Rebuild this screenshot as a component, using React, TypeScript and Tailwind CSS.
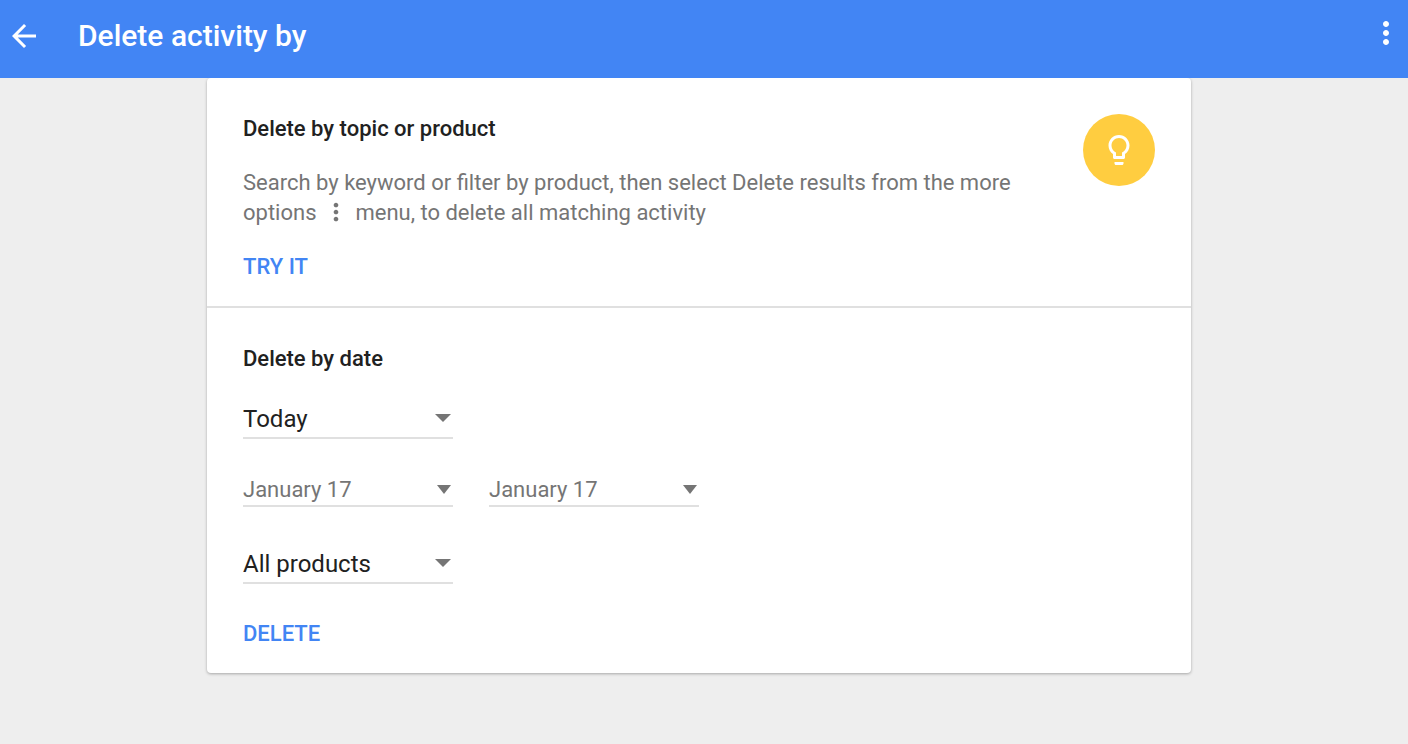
import React from "react";

function MoreIcon({ className }: { className: string }) {
  return (
    <svg viewBox="0 0 24 24" fill="currentColor" className={className} aria-hidden="true">
      <path d="M12 8c1.100 0 2-.900 2-2s-.900-2-2-2-2 .900-2 2 .900 2 2 2zm0 2c-1.100 0-2 .900-2 2s.900 2 2 2 2-.900 2-2-.900-2-2-2zm0 6c-1.100 0-2 .900-2 2s.900 2 2 2 2-.900 2-2-.900-2-2-2z" />
    </svg>
  );
}

function Caret({ className }: { className: string }) {
  return (
    <svg viewBox="0 0 16 8" preserveAspectRatio="none" fill="currentColor" className={className} aria-hidden="true">
      <path d="M0 0h16L8 8z" />
    </svg>
  );
}

function Picker({ label, value }: { label: string; value: string }) {
  return (
    <div className="grid w-[210px] items-center border-b-2 border-[#e0e0e0] text-[#212121]">
      <select aria-label={label} defaultValue={value} className="col-start-1 row-start-1 h-[38px] w-full appearance-none bg-transparent pt-0.5 text-2xl outline-none">
        <option>{value}</option>
      </select>
      <Caret className="pointer-events-none col-start-1 row-start-1 mr-0.5 h-2 w-4 justify-self-end text-[#757575]" />
    </div>
  );
}

function DateButton({ label, value }: { label: string; value: string }) {
  return (
    <button type="button" aria-label={label} className="flex h-[34px] w-[210px] items-end justify-between border-b-2 border-[#e0e0e0] pr-0.5 text-[22px] leading-[30px] text-[#757575]">
      {value}
      <Caret className="h-[9px] w-3.5 self-center" />
    </button>
  );
}

export default function App() {
  return (
    <div className="min-h-screen bg-[#eeeeee] font-['Roboto',sans-serif]">
      <header className="relative z-10 flex h-[78px] items-center bg-[#4285f4] pb-1.5 text-white">
        <button type="button" aria-label="Back" className="ml-1.5">
          <svg viewBox="0 0 24 24" fill="currentColor" className="size-9" aria-hidden="true">
            <path d="M20 11H7.830l5.590-5.590L12 4l-8 8 8 8 1.410-1.410L7.830 13H20v-2z" />
          </svg>
        </button>
        <h1 className="ml-9 text-[30px] leading-9 font-medium">Delete activity by</h1>
        <button type="button" aria-label="More options" className="mr-1 mb-1.5 ml-auto">
          <MoreIcon className="size-9" />
        </button>
      </header>

      <div className="pr-2.5">
        <main className="mx-auto max-w-[984px] rounded-sm bg-white shadow-[0_1px_3px_rgba(0,0,0,0.3)]">
          <section className="flex items-start justify-between border-b-2 border-[#e0e0e0] px-9 pt-9 pb-6">
            <div>
              <h2 className="text-[22px] leading-[30px] font-medium text-[#212121]">Delete by topic or product</h2>
              <p className="mt-6 max-w-[790px] text-[22px] leading-[30px] text-[#757575]">
                Search by keyword or filter by product, then select Delete results from the more options{" "}
                <MoreIcon className="inline size-7 align-[-6px]" />{" "}
                menu, to delete all matching activity
              </p>
              <a href="#try" className="mt-6 inline-block text-[22px] leading-[30px] font-medium text-[#4285f4]">TRY IT</a>
            </div>
            <div className="flex size-[72px] shrink-0 items-center justify-center rounded-full bg-[#ffcd40] text-white">
              <svg viewBox="0 0 24 24" fill="currentColor" className="size-9" aria-hidden="true">
                <path d="M9 21c0 .550.450 1 1 1h4c.550 0 1-.450 1-1v-1H9v1zm3-19C8.140 2 5 5.140 5 9c0 2.380 1.190 4.470 3 5.740V17c0 .550.450 1 1 1h6c.550 0 1-.450 1-1v-2.260c1.810-1.270 3-3.360 3-5.740 0-3.860-3.140-7-7-7zm2.850 11.100l-.850.600V16h-4v-2.300l-.850-.600C7.800 12.160 7 10.630 7 9c0-2.760 2.240-5 5-5s5 2.240 5 5c0 1.630-.800 3.160-2.150 4.100z" />
              </svg>
            </div>
          </section>

          <section className="px-9 pt-9 pb-6">
            <h2 className="mb-[25px] text-[22px] leading-[30px] font-medium text-[#212121]">Delete by date</h2>
            <Picker label="Date range" value="Today" />
            <div className="mt-[34px] mb-[37px] flex flex-wrap gap-9">
              <DateButton label="Start date, January 17" value="January 17" />
              <DateButton label="End date, January 17" value="January 17" />
            </div>
            <Picker label="Product" value="All products" />
            <button type="button" className="mt-[35px] block text-[22px] leading-[30px] font-medium text-[#4285f4]">DELETE</button>
          </section>
        </main>
      </div>
    </div>
  );
}
